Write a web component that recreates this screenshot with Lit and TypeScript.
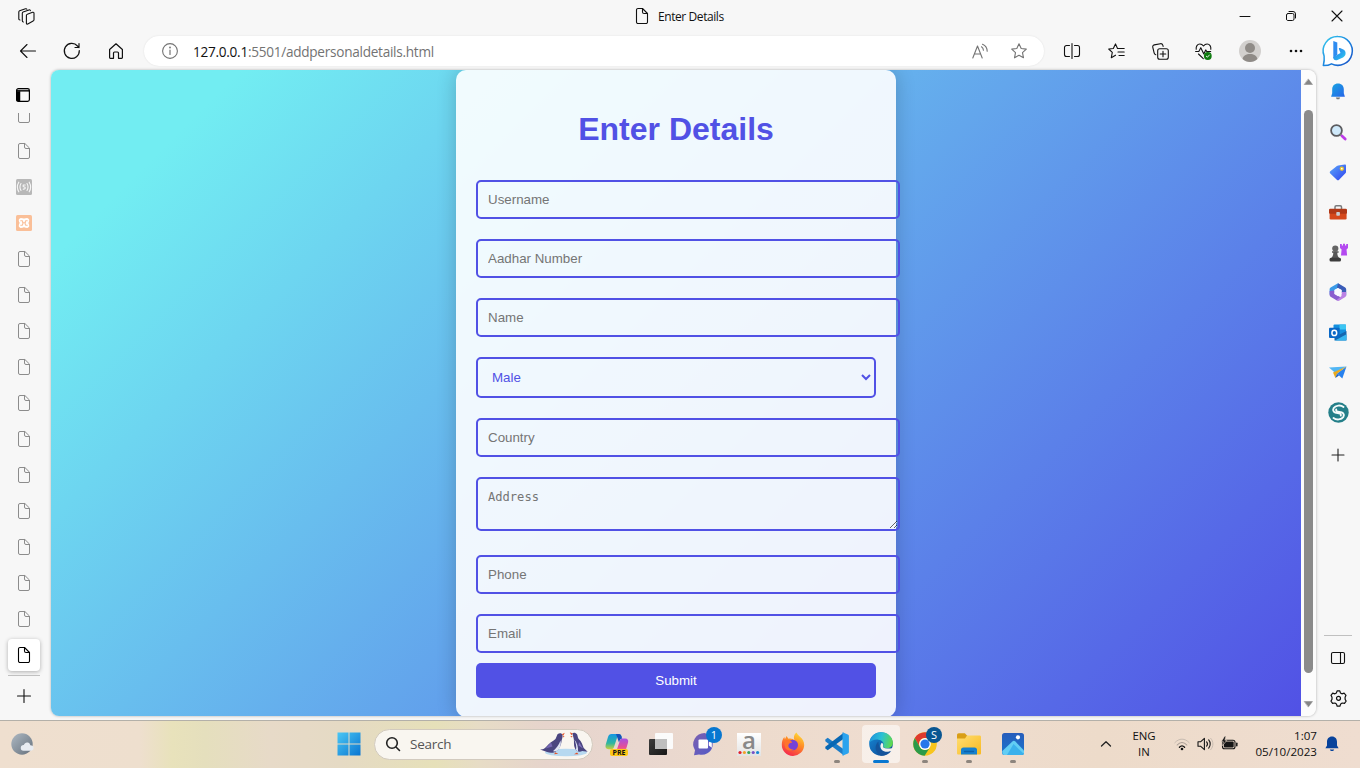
import { LitElement, html, css, svg, TemplateResult } from "lit";
import { customElement } from "lit/decorators.js";

const icon = (w: number, h: number, body: unknown, viewBox = `0 0 ${w} ${h}`) =>
  html`<svg width=${w} height=${h} viewBox=${viewBox} fill="none" stroke-linecap="round" stroke-linejoin="round">${body}</svg>`;

const line = (w: number, h: number, d: string, color = "#111", sw = 1.1) =>
  icon(w, h, svg`<path d=${d} stroke=${color} stroke-width=${sw} />`);

const docPath = "M6.500.500H2A1.500 1.500 0 0 0 .500 2v12A1.500 1.500 0 0 0 2 15.500h8a1.500 1.500 0 0 0 1.500-1.500V5.500zM6.500.500V4A1.500 1.500 0 0 0 8 5.500h3.500";
const doc = (color = "#8c8c8c", sw = 1) => line(12, 16, docPath, color, sw);
const starPath = "M8 .8l2.200 4.700 5.100.6-3.800 3.500 1 5.200L8 12.300l-4.500 2.500 1-5.200L.7 6.100l5.100-.6z";

const tabStack = icon(17, 17, svg`<g stroke="#111" stroke-width="1.1">
  <path d="M9.300 6.200l5.300-1.900c.8-.3 1.400.1 1.400.9v6.500c0 .7-.3 1.100-.9 1.400l-5.300 2.900c-.8.3-1.400 0-1.400-.8V7.400c0-.6.300-1 .9-1.200z"/>
  <path d="M5.400 14c-.8 0-1.100-.4-1.100-1.200V5.200c0-.6.300-1 .8-1.200L11 1.900c.7-.2 1.300 0 1.400.7"/>
  <path d="M2 12c-.8 0-1.200-.4-1.200-1.200V4c0-.6.300-1 .8-1.200L7.500.8c.7-.2 1.200-.1 1.400.5"/></g>`);

const favList = icon(17, 16, svg`<g stroke="#111" stroke-width="1.1"><path d="M9.500 5.500L7.500.9 5.300 5.500.7 6l3.600 3.400-1 5.300 4.200-2.500M9.500 5.500h6.700M10 9h6.200M11 12.500h5.200"/></g>`);

const collections = icon(17, 17, svg`<g stroke="#111" stroke-width="1.1"><rect x="5.700" y="5.700" width="10.600" height="10.600" rx="2"/><path d="M11 8.200v5.600M8.200 11h5.600M3.800 11.800c-.9-.2-1.400-.8-1.600-1.600L.8 4.300C.5 3 1 2.200 2.300 1.900L8.400.7c1.300-.2 2 .3 2.400 1.500l.3 1.200"/></g>`);

const heart = icon(18, 17, svg`<path d="M1.200 6.300C.8 3.500 2.300 1 4.900 1c1.700 0 2.700.8 3.600 2 .9-1.200 1.900-2 3.600-2 2.600 0 4.100 2.500 3.700 5.300M.6 8.500h3.200l2-3.800 3 6.200 1.900-4 1 1.600h4M3.500 11l4.800 4.700" stroke="#111" stroke-width="1.100"/><circle cx="12.800" cy="13" r="3.900" fill="#0f7b10"/><path d="M11.300 13.200l1.100 1 2-2.200" stroke="#fff" stroke-width=".9"/>`);

const avatar = icon(22, 22, svg`<circle cx="11" cy="11" r="11" fill="#d2d0ce"/><circle cx="11" cy="8" r="5" fill="#8f8b87"/><path d="M3.600 19c.6-3.300 3.500-5 7.400-5s6.800 1.700 7.400 5c-4 4-10.800 4-14.800 0z" fill="#8f8b87"/>`);

const bing = icon(32, 32, svg`
  <defs><linearGradient id="bingRing" x1="0" y1="0" x2="1" y2="1"><stop offset="0" stop-color="#37cdee"/><stop offset=".5" stop-color="#1b87e0"/><stop offset="1" stop-color="#1a4ec4"/></linearGradient>
  <linearGradient id="bingB" x1="0" y1="0" x2="1" y2="1"><stop offset="0" stop-color="#2a7be8"/><stop offset=".6" stop-color="#2aa8ee"/><stop offset="1" stop-color="#35d8ea"/></linearGradient></defs>
  <path d="M16 1.500a14.400 14.400 0 1 1-6.500 27.300c-2.500 1.600-5.500 1.800-8.200 1.800.9-3.700 1.200-6.500.8-9.500A14.400 14.400 0 0 1 16 1.500z" fill="#fff" stroke="url(#bingRing)" stroke-width="1.500"/>
  <path d="M11.300 6l4 1.400v12l-4 4z" fill="#2f8cf0"/><path d="M11.300 22.200l4-2.500 3.200-1.700-1.500-3.800c-.4-1 .2-1.400 1-1.100l2.800 1.200c2.200.9 3.200 2.700 2.700 5-.3 1.500-1.200 2.400-2.500 3.200L16 24.700c-2.700 1.500-4.800 0-4.700-2.500z" fill="url(#bingB)"/>`);

const bell = icon(14, 17, svg`<defs><linearGradient id="bellG" x1="0" y1="0" x2="1" y2="1"><stop offset="0" stop-color="#18a6e2"/><stop offset="1" stop-color="#2764e8"/></linearGradient></defs><path d="M4.800 14.500h4.400l-1 1.700H5.800z" fill="#777"/><path d="M7 .5c3.500 0 5.800 2.400 5.800 5.700v4l1.100 3.500H.1l1.100-3.500v-4C1.200 2.900 3.500.5 7 .5z" fill="url(#bellG)"/>`);

const magnifier = icon(17, 17, svg`<circle cx="6.500" cy="6.500" r="5.400" fill="#cfe9fa" stroke="#5c5c60" stroke-width="1.800"/><path d="M10.500 10.500l1.500 1.500" stroke="#777" stroke-width="2"/><path d="M12 12l3.200 3" stroke="#bd3be8" stroke-width="2.800"/>`);

const tag = icon(18, 17, svg`<defs><linearGradient id="tagG" x1="0" y1="0" x2="1" y2="1"><stop offset="0" stop-color="#5ba8fb"/><stop offset="1" stop-color="#3042ee"/></linearGradient></defs><path d="M9.200 1.400l6.500-.9c.9-.1 1.300.3 1.300 1.200v6.200c0 .6-.2 1-.6 1.400l-6.300 6.500c-.7.7-1.600.7-2.300 0L1.300 9.500c-.7-.7-.7-1.500 0-2.200L7.900 2z" fill="url(#tagG)"/><circle cx="12.800" cy="4.700" r="1.500" fill="#fff" stroke="#eec526" stroke-width="1.300"/>`);

const toolbox = icon(18, 15, svg`<path d="M6 4V2c0-.8.4-1.200 1.200-1.200h4.100c.8 0 1.200.4 1.200 1.200v2" stroke="#7b7b7d" stroke-width="1.500"/><rect x=".6" y="7" width="17" height="7.500" rx="1.200" fill="#d5481c"/><rect x="0" y="3.700" width="18" height="5" rx="1.200" fill="#b03817"/><rect x="7.300" y="7" width="3.600" height="3.800" rx=".8" fill="#c8cdd2"/>`);

const chess = icon(19, 19, svg`<path d="M11 1h1.800v1.500h1.200V.8h2v1.700h1.200V1H19v4l-1.500 1.500.6 6H12l.6-6L11 5z" fill="#b44af0"/><circle cx="6.300" cy="5.600" r="3.100" fill="#656565"/><path d="M3 8.200h6.600v1.600H8.300c0 2 .5 3.800 1.900 5.200H2.300c1.400-1.400 2-3.200 2-5.200H3z" fill="#565656"/><rect x=".5" y="14.800" width="11.500" height="3.700" rx="1.500" fill="#3c3c3c"/>`);

const m365 = icon(18, 18, svg`<path d="M9 .3L2 4.300C1 4.900.600 5.500.600 6.600v5.200L5.500 9.500V7L12.500 3z" fill="#3b9be8"/><path d="M9 .3l6.800 3.900c1 .6 1.400 1.300 1.400 2.400v6L12.500 10V7L8 4.700z" fill="#3a5cb8"/><path d="M.6 8v3.500c0 1.100.4 1.800 1.400 2.400l5.500 3.300c1 .5 1.900.5 2.800 0l3-1.800L9 12.800 5.500 10.700V7.500z" fill="#8b5fcf"/><path d="M17.200 9v3c0 1-.4 1.700-1.300 2.200l-5.600 3.200c-1 .5-2 .3-2.800-.2l5-4.200V9z" fill="#bb82e4"/><path d="M9 5l3.600 2.100v4L9 13.200l-3.600-2.100v-4z" fill="#fafaff"/>`);

const outlook = icon(18, 17, svg`<rect x="4.500" y=".5" width="12.500" height="13" rx="1" fill="#1490df"/><path d="M10.500.5H17v5h-6.500z" fill="#3cc5f2"/><path d="M17.500 7v9.500H5.500V13z" fill="#1467b0"/><path d="M6 16.500l11.500-6.300v5.300c0 .6-.4 1-1 1z" fill="#36b6f0"/><rect x="0" y="3.800" width="10.600" height="10.200" rx="1" fill="#0a68c6"/><ellipse cx="5.300" cy="8.900" rx="2.400" ry="2.600" stroke="#fff" stroke-width="1.500"/>`);

const plane = icon(18, 13, svg`<path d="M0 1.500L17.500.4 5.800 6.600z" fill="#51b6f4"/><path d="M17.500.4L8 7.500l5.300 5z" fill="#2781ee"/><path d="M17.500.4L4 6.500l2.400 5.500L8 7.700z" fill="#eaaa20"/><path d="M8 7.700L6.400 12l3.600-2.500z" fill="#1c60c8"/>`);

const swirl = icon(21, 21, svg`<circle cx="10.500" cy="10.500" r="10.200" fill="#247f89"/><path d="M15.500 5C12.500 2.700 7.500 3.300 5.700 6c-1.600 2.800.5 5 3.800 5 2.500 0 3.800 1 3.300 2.600M5.500 16c3 2.300 8 1.700 9.800-1 1.600-2.800-.5-5-3.800-5-2.500 0-3.800-1-3.300-2.600" stroke="#f4fbfb" stroke-width="1.900"/>`);

const gearPath = "M7.200.8h2.600l.6 2.100 1.500.9 2.200-.6 1.900 2.100-.9 2v1.900l1 1.900-1.600 2.300-2.300-.4-1.500.9-.8 2.300H7.200l-.8-2.300-1.500-.9-2.300.4L1 11.100l1-1.900V7.300L1 5.300l1.700-2.100 2.200.6 1.500-.9z";
const gear = icon(17, 17, svg`<path d=${gearPath} stroke="#111" stroke-width="1.200"/><circle cx="8.500" cy="8.300" r="2" stroke="#111" stroke-width="1.200"/>`);

const weather = icon(24, 24, svg`<defs><linearGradient id="moonG" x1="0" y1="0" x2="1" y2="1"><stop offset="0" stop-color="#aeb9c3"/><stop offset="1" stop-color="#65707c"/></linearGradient></defs><circle cx="11" cy="12" r="10.700" fill="url(#moonG)"/><path d="M12.500 18.800a2.900 2.900 0 0 1 .3-5.800c.7-2 2.200-2.800 3.800-2.500 1.500.2 2.400 1.200 2.700 2.700 2 0 3.300 1 3.300 2.800s-1.200 2.800-3 2.800z" fill="#e8ecf2"/>`);

const windows = icon(24, 24, svg`<defs><linearGradient id="winG" gradientUnits="userSpaceOnUse" x1="0" y1="0" x2="24" y2="24"><stop offset="0" stop-color="#4cc9f5"/><stop offset="1" stop-color="#0873d0"/></linearGradient></defs><path d="M.5.500h11v11H.500zM12.500.500h11v11h-11zM.500 12.500h11v11H.500zM12.500 12.500h11v11h-11z" fill="url(#winG)"/>`);

const penguins = icon(50, 26, svg`<ellipse cx="27" cy="21.500" rx="21" ry="3.800" fill="#b7d9f0"/>
  <path d="M18.500 3.200c2-1.500 4.500-1.200 5 .8.300 2-.3 3.600-.9 5.400-.3 5-2.500 9.400-6.500 11.500-3 1.300-5.200 1-8 .2L1 18.500c3.200.2 4.500-.7 6.500-3 2.600-3.300 6.300-5.300 9-7.500z" fill="#4a4580"/>
  <path d="M21.500 9.500c1 3.700-.1 7.300-2.800 9.800-1.600 1.200-3 1.300-4.800 1 3.300-2.700 6-6.200 7.600-10.800z" fill="#dfe4f4"/><path d="M12 11.500L6.500 17.500l7-2z" fill="#7768b4"/>
  <path d="M22.800 3.300l3-1.600-1.500 3zM16 21.300l3.300 1.500-4 .4zM23.700 5.300l1.800-.2-.9 1.400z" fill="#e2552c"/>
  <path d="M33.300 2.300c1.200-1.200 3.800-.7 4.700 1 .7 1.300.6 2.600 1.500 4.500 3.300 3 4.200 6.600 5.200 9.300l4 3.600-5.500-.6c-2.500 1.500-5.500.7-7.200-2.500-1.600-3.200-.7-6.800-1.200-9.500z" fill="#4a4580"/>
  <path d="M35.300 8.500c1.700 3.500 2.400 7.500 1.700 10.500l2 1.500c.4-4.500-1-9-3.700-12z" fill="#dfe4f4"/><path d="M40 11l4 6.500-4.500-3z" fill="#8375c0"/>
  <path d="M33.800 2.600l-3-1.300 1.500 2.900zM38 21.500l-3 1.700h4.500zM33.500 4.900l-2.300.3 1.600 1.300z" fill="#e2552c"/>`);

const copilot = icon(24, 24, svg`<defs><linearGradient id="cpA" x1="0" y1="0" x2="0" y2="1"><stop offset="0" stop-color="#1597e4"/><stop offset=".6" stop-color="#2eb5a0"/><stop offset="1" stop-color="#c8d03c"/></linearGradient><linearGradient id="cpB" x1="0" y1="0" x2="0" y2="1"><stop offset="0" stop-color="#a551e4"/><stop offset=".6" stop-color="#e84e93"/><stop offset="1" stop-color="#f7a04f"/></linearGradient></defs>
  <path d="M6.500 2h7c2 0 2.700 1 3.200 3h-4.400L9 15c-.5 1.600-1.300 2.200-3 2.200H3.500C1 17.200 0 15.300.7 12.800L3 4.900C3.600 3 4.600 2 6.500 2z" fill="url(#cpA)"/><path d="M17.500 21h-7c-2 0-2.700-1-3.200-3h4.400L15 8.500c.5-1.500 1.300-2 3-2h2.200c2.500 0 3.500 1.700 2.800 4.200L20.800 18c-.6 2-1.500 3-3.300 3z" fill="url(#cpB)"/><path d="M11 2h2.500c2 0 2.700 1 3.200 3l.4 1.600c-1.500.2-2 1-2.400 2L14 10.500z" fill="#1753ba"/>`);

const taskView = icon(24, 24, svg`<defs><linearGradient id="tvG" x1="0" y1="0" x2="1" y2="1"><stop offset="0" stop-color="#3d3d3d"/><stop offset="1" stop-color="#171717"/></linearGradient></defs><rect x="0" y="7" width="18" height="16" rx="1" fill="url(#tvG)"/><rect x="6" y="1" width="18" height="16" rx="1" fill="#fbfbfb"/><path d="M6 7h12v10H6z" fill="#bebebe"/>`);

const chat = icon(24, 24, svg`<defs><linearGradient id="chatG" x1="0" y1="0" x2="1" y2="1"><stop offset="0" stop-color="#7d61b0"/><stop offset="1" stop-color="#5159c8"/></linearGradient></defs><path d="M11.500 1A11 11 0 1 1 6 22.500L1 23.300l1-5A11.300 11.300 0 0 1 11.500 1z" fill="url(#chatG)"/><rect x="5.500" y="7.500" width="9.500" height="9" rx="1" fill="#fff"/><path d="M15.800 10.500l3-2.200v7.400l-3-2.200z" fill="#fff"/>`);

const firefox = icon(24, 24, svg`<defs><linearGradient id="ffG" x1=".8" y1="0" x2=".3" y2="1"><stop offset="0" stop-color="#ffe038"/><stop offset=".45" stop-color="#ff8a26"/><stop offset="1" stop-color="#f5264f"/></linearGradient></defs><path d="M15.500.5c.8 2 2 2.700 3.500 4.300 2.800 2.300 4.200 5 4.200 8.200A11.200 11.200 0 1 1 .8 12.500c0-3.200 1-5.500 2.500-7.500l.6 2.300L5.600 4l1.800 2.800c2.300-.8 5 0 6 1.500C12.300 5 13 2.500 15.500.5z" fill="url(#ffG)"/><circle cx="11.700" cy="13" r="5.300" fill="#7542d7"/><path d="M4.500 8.300c2.800-1 5.700 0 6.800 2.200-1.500 0-3.400.8-3.900 2.500C7 16 10 17.700 13 17.500c-4.500 2.500-8.700.5-9.200-3.500-.3-2.200 0-4 .7-5.700z" fill="#ff742d"/>`);

const vscode = icon(24, 24, svg`<path d="M.3 7.500l2.400-1.700L19 17.500v6L.3 9.300z" fill="#1c7cc8"/><path d="M.3 16.500l2.400 1.700L19 6.500V.5L.3 14.700z" fill="#0867b3"/><path d="M17.500.2l5.300 2.200c.7.3 1.100.8 1.100 1.600v16c0 .8-.4 1.300-1.100 1.600l-5.300 2.200z" fill="#2ba3ee"/>`);

const edge = icon(24, 24, svg`<defs><linearGradient id="edA" x1="0" y1=".3" x2="1" y2=".5"><stop offset="0" stop-color="#1e92db"/><stop offset=".5" stop-color="#2bc1d5"/><stop offset="1" stop-color="#60d84c"/></linearGradient><linearGradient id="edB" x1="0" y1="0" x2="1" y2="1"><stop offset="0" stop-color="#1688d7"/><stop offset="1" stop-color="#0d468e"/></linearGradient></defs><circle cx="12" cy="12" r="11.800" fill="url(#edB)"/><path d="M.3 11C1 4.600 5.900.2 12 .2c7 0 11.900 5 11.900 10.500 0 3.300-2.600 5.500-5.700 5.500-3.200 0-4.600-1.200-4-2.500 1.200-2.600-.8-5.500-4.700-6C5.500 7.200 2 8.600.3 11z" fill="url(#edA)"/><path d="M9.500 9.500c-3.800 2.800-4.700 10.500 2.500 14.300 4 .3 8-1.700 10.200-4.800-5.800 3.100-13.200-1-12.700-9.500z" fill="#14549c"/><path d="M13 10.800c-2.500 2-2.300 6.700 2 8.500 3 1 5.500.5 8-1l.8-2.600c-1.500.6-3.500.9-5.600.9-3.200 0-4.800-1.300-4.200-2.800.4-1 .2-2.200-1-3z" fill="#f4f1ee"/>`);

const chrome = icon(24, 24, svg`<circle cx="12" cy="12" r="11.800" fill="#f8c51c"/><path d="M1.800 6.100A11.800 11.800 0 0 1 22.200 6H12a6 6 0 0 0-5.200 9z" fill="#df3a2e"/><path d="M1.800 6.100a11.800 11.800 0 0 0 9.800 17.700l5.600-8.800a6 6 0 0 1-10.400 0z" fill="#2b9a4a"/><circle cx="12" cy="12" r="5.900" fill="#fff"/><circle cx="12" cy="12" r="4.600" fill="#2777ea"/>`);

const folder = icon(24, 24, svg`<defs><linearGradient id="foG" x1="0" y1="0" x2="1" y2="1"><stop offset="0" stop-color="#ffde72"/><stop offset="1" stop-color="#f8b921"/></linearGradient></defs><path d="M0 3.500C0 2 .5 1.300 1.800 1.300h6L10.500 4v3H0z" fill="#d99e16"/><path d="M0 6.500h8l2-3h12.500c1 0 1.500.5 1.500 1.500v16c0 1-.5 1.500-1.500 1.500h-21C.5 22.500 0 22 0 21z" fill="url(#foG)"/><path d="M4 22.500V18c0-1.800.8-2.600 2.500-2.600h11c1.700 0 2.500.8 2.500 2.600v4.500z" fill="#1680ce"/><path d="M7.500 19.500h9" stroke="#0b61ab" stroke-width="1.300"/>`);

const photos = icon(24, 24, svg`<defs><linearGradient id="phG" x1="0" y1="0" x2="0" y2="1"><stop offset="0" stop-color="#275dbb"/><stop offset="1" stop-color="#1a75cd"/></linearGradient></defs><rect x="1" y="1" width="22" height="22" rx="2.500" fill="url(#phG)"/><path d="M1.300 19L11.400 9.500c1-.9 2-.9 3 0l8.600 9v2c0 1.600-.9 2.500-2.500 2.500h-17C2 23 1 22 1.300 19z" fill="#62cdf4"/><path d="M12.500 12L23 22c-.8.800-1.500 1-2.500 1H6z" fill="#1b9be6" opacity=".55"/><circle cx="17" cy="5.300" r="2.100" fill="#fff"/>`);

const wifi = icon(16, 13, svg`<path d="M.8 4.700C5-.1 11-.1 15.200 4.700" stroke="#c8bcb1" stroke-width="1"/><path d="M3.200 7c3-3.300 6.600-3.300 9.600 0" stroke="#a89d94" stroke-width="1.100"/><path d="M5.400 9.200c1.700-1.800 3.500-1.800 5.200 0" stroke="#111" stroke-width="1.300"/><circle cx="8" cy="11" r="1.300" fill="#111"/>`);

const volume = icon(17, 14, svg`<path d="M1 4.800h2.500L7.400 1.300v11.400L3.500 9.200H1zM9.600 4.800c1 1.200 1 3.200 0 4.400M11.700 2.900c2 2.300 2 5.900 0 8.200" stroke="#161616" stroke-width="1.100"/><path d="M13.700 1.300c3 3.200 3 8.200 0 11.400" stroke="#c8bcb1" stroke-width="1"/>`);

const battery = icon(17, 14, svg`<rect x="1.500" y="3.300" width="12.500" height="8.400" rx="2" stroke="#161616" stroke-width="1.100"/><rect x="2.800" y="4.600" width="9.900" height="5.800" rx=".8" fill="#161616"/><path d="M15.800 6.200v2.600" stroke="#161616" stroke-width="1.500"/><path d="M3.600-.8L.3 4.700h2L1.500 8.700 5.900 3.200h-2L4.900-.8z" fill="#161616" stroke="#eeddcf" stroke-width=".6"/>`);

const noticeBell = icon(14, 16, svg`<path d="M7 .5c3.200 0 5 2.300 5 5.200v3.800l1.600 2.800H.4L2 9.500V5.700C2 2.800 3.800.5 7 .5zM4.800 13.500h4.400c-.4 1-1.200 1.600-2.200 1.600s-1.800-.6-2.200-1.600z" fill="#07429b"/>`);

@customElement("details-form")
export class DetailsForm extends LitElement {
  static styles = css`
    :host { display: block; font-family: "Liberation Sans", Arial, sans-serif; }
    .card { box-sizing: border-box; width: 440px; height: 647px; padding: 20px; border-radius: 10px; background: rgba(255, 255, 255, 0.9); box-shadow: 0 0 20px rgba(0, 0, 0, 0.2); }
    .title { margin: 18px 0 30px; height: 42px; line-height: 42px; font-size: 32px; text-align: center; color: #5151e5; }
    .form { display: flex; flex-direction: column; gap: 20px; width: 400px; }
    .field { box-sizing: border-box; width: 424px; height: 39px; margin: 0; padding: 10px; border: 2px solid #5151e5; border-radius: 5px; background: transparent; font-family: inherit; font-size: 13.333px; color: #5151e5; outline: none; }
    .field::placeholder { color: #757575; }
    .choice { width: 400px; height: 41px; }
    .area { height: 54px; margin-bottom: 4px; padding-top: 11px; font-family: "DejaVu Sans Mono", monospace; font-size: 12.1px; }
    .submit { width: 400px; height: 35px; margin-top: -10px; padding: 0; border: 0; border-radius: 5px; background: #5151e5; color: #fff; font-family: inherit; font-size: 13.333px; }
  `;

  render() {
    return html`<div class="card">
      <h1 class="title">Enter Details</h1>
      <div class="form">
        <input class="field" placeholder="Username" />
        <input class="field" placeholder="Aadhar Number" />
        <input class="field" placeholder="Name" />
        <select class="field choice"><option>Male</option></select>
        <input class="field" placeholder="Country" />
        <textarea class="field area" placeholder="Address"></textarea>
        <input class="field" placeholder="Phone" />
        <input class="field" placeholder="Email" />
        <button class="submit">Submit</button>
      </div>
    </div>`;
  }
}

@customElement("app-root")
export class AppRoot extends LitElement {
  static styles = css`
    :host { display: flex; flex-direction: column; width: 1360px; height: 768px; overflow: hidden; background: #f7f7f7; color: #111; font-family: "Open Sans", "Noto Sans", sans-serif; font-size: 12px; }
    svg { display: block; flex: none; overflow: visible; }
    .titlebar { display: grid; grid-template-columns: 52px 1fr 138px; height: 32px; align-items: center; }
    .center { display: flex; align-items: center; justify-content: center; }
    .tab-title { display: flex; align-items: center; gap: 10px; padding-left: 584px; font-size: 12px; letter-spacing: -0.42px; white-space: nowrap; }
    .controls { display: grid; grid-template-columns: repeat(3, 46px); }
    .toolbar { display: flex; height: 38px; align-items: center; }
    .nav { display: flex; padding: 0 6px; }
    .tool { width: 44px; height: 38px; }
    .tool.wide { width: 48px; }
    .tool.last { width: 40px; }
    .address { display: flex; align-items: center; box-sizing: border-box; width: 900px; height: 30px; margin-right: 6px; padding: 0 17px 0 18px; border-radius: 15px; background: #fff; box-shadow: 0 0 2px rgba(0, 0, 0, 0.1); }
    .url { flex: 1; padding-left: 15px; font-size: 13.6px; letter-spacing: -0.27px; color: #737373; white-space: nowrap; }
    .host { color: #111; }
    .address-icons { display: flex; gap: 23px; align-items: center; }
    .middle { display: flex; height: 650px; }
    .tabs { display: flex; flex-direction: column; width: 51px; }
    .tabs-menu { height: 43px; padding-left: 16px; padding-top: 18px; box-sizing: border-box; }
    .clipped { display: flex; align-items: flex-end; box-sizing: border-box; height: 10px; margin-bottom: 10px; padding-left: 18px; overflow: hidden; }
    .tab { display: flex; align-items: center; justify-content: center; width: 48px; height: 36px; }
    .active { display: flex; align-items: center; justify-content: center; width: 32px; height: 32px; border-radius: 4px; background: #fff; box-shadow: 0 1px 4px rgba(0, 0, 0, 0.3); }
    .rule { height: 1px; margin: 2px 0 0 8px; width: 32px; background: #c0c0c0; }
    .new-tab { width: 47px; height: 39px; }
    .view { display: flex; width: 1265px; height: 646px; border-radius: 8px; overflow: hidden; box-shadow: 0 0 3px rgba(0, 0, 0, 0.3); }
    .page { display: flex; justify-content: center; width: 1250px; height: 646px; overflow: hidden; background: linear-gradient(135deg, #72edf2 10%, #5151e5 100%); }
    .scroll { display: flex; flex-direction: column; align-items: center; justify-content: space-between; box-sizing: border-box; width: 15px; padding: 8px 0; background: #fcfcfc; }
    .thumb { width: 9px; height: 563px; margin-top: 13px; margin-bottom: 17px; border-radius: 5px; background: #8b8b8b; }
    .side { display: flex; flex-direction: column; align-items: center; width: 44px; }
    .app { width: 44px; height: 40px; }
    .app.first { height: 41px; margin-top: 1px; }
    .side .plus { width: 43px; height: 46px; }
    .side-rule { width: 28px; height: 1px; margin-top: 157px; margin-bottom: 2px; background: #c0c0c0; }
    .taskbar { position: relative; display: flex; align-items: center; box-sizing: border-box; height: 48px; padding-left: 1px; padding-bottom: 1px; border-top: 1px solid #b3b0a9; background: linear-gradient(90deg, #efdfcf 0, #eedfce 140px, #e8e2bb 172px, #e5dfbd 205px, #e7dac8 270px, #e5dac4 340px, #e6e0b9 435px, #e7dcc6 480px, #e6d4cc 545px, #e9d7cf 640px, #eddbcd 760px, #efddd0 900px, #eddbca 1100px, #efddd0 1360px); }
    .weather { width: 44px; }
    .start { width: 44px; margin-left: 282px; }
    .search { display: flex; align-items: center; box-sizing: border-box; width: 219px; height: 31px; margin-left: 3px; margin-right: 2px; padding: 0 3px 0 11px; border: 1px solid #d2cabe; border-radius: 16px; background: #f9f6f0; font-size: 13.5px; color: #555; letter-spacing: -0.25px; }
    .search-label { flex: 1; padding-left: 10px; }
    .task { position: relative; display: flex; align-items: center; justify-content: center; width: 44px; height: 46px; }
    .task.selected::before { content: ""; position: absolute; left: 3px; top: 4px; width: 38px; height: 38px; border-radius: 4px; background: rgba(255, 255, 255, 0.55); }
    .task svg { position: relative; }
    .running::after { content: ""; position: absolute; left: 19px; top: 39px; width: 6px; height: 3px; border-radius: 2px; background: #8d857e; }
    .selected.running::after { left: 14px; width: 16px; background: #0877d1; }
    .badge { position: absolute; left: 23px; top: 6px; width: 16px; height: 16px; border-radius: 8px; background: #0877d0; color: #fff; font-size: 11px; line-height: 16px; text-align: center; }
    .badge.dark { background: #095692; }
    .pre { position: absolute; left: 15px; top: 28px; width: 18px; height: 7px; border-radius: 2px; background: #ffc817; color: #111; font-size: 7px; line-height: 7px; font-weight: 700; text-align: center; }
    .letter { display: flex; flex-direction: column; align-items: center; width: 24px; height: 23px; background: linear-gradient(#fff, #e3e3e3); color: #888; font-weight: 600; font-size: 24px; line-height: 14px; }
    .glyph { height: 18px; }
    .dots { display: flex; gap: 1px; }
    .tray { display: flex; align-items: center; margin-left: 59px; }
    .chevron { width: 24px; }
    .lang { width: 34px; margin-left: 9px; font-size: 11.4px; line-height: 16px; text-align: center; }
    .status { display: flex; align-items: center; gap: 7px; margin-left: 13px; }
    .clock { width: 79px; font-size: 11.6px; line-height: 16px; text-align: right; white-space: nowrap; }
    .notice { margin-left: 8px; }
  `;

  private tab(content: TemplateResult) {
    return html`<div class="tab">${content}</div>`;
  }

  private task(content: TemplateResult, cls = "", extra: unknown = "") {
    return html`<div class="task ${cls}">${content}${extra}</div>`;
  }

  render() {
    const liveServer = icon(16, 16, svg`<rect width="16" height="16" rx="1.500" fill="#b8b8b8"/><path d="M2.800 3.200c-1.800 3-1.800 6.600 0 9.600M5 4.500c-1.300 2.200-1.300 4.800 0 7M13.200 3.200c1.800 3 1.800 6.600 0 9.600M11 4.500c1.300 2.200 1.300 4.800 0 7M9.300 6H7.200v1.700c2.700-.3 2.700 2.700 0 2.400" stroke="#f7f7f7" stroke-width="1.100"/>`);
    const xampp = icon(16, 16, svg`<rect width="16" height="16" rx="1.500" fill="#fabf98"/><path d="M5 5.500h1.500l1 2.500-1 2.500H5M11 5.500H9.500L8.500 8l1 2.500H11M5 5.500L6 8l-1 2.500M11 5.500L10 8l1 2.500" stroke="#fff" stroke-width="4.600"/><path d="M4.800 5.800c1.200-.3 1.900 0 1.900 1.200v.9h2.600V7c0-1.200.7-1.500 1.900-1.200M4.800 10.200c1.200.3 1.900 0 1.900-1.200M11.200 10.200c-1.200.3-1.900 0-1.900-1.200" stroke="#fabf98" stroke-width="1.100"/>`);
    const apps = [magnifier, tag, toolbox, chess, m365, outlook, plane, swirl];
    const dots = ["#e3202c", "#f1a12a", "#35a457", "#7651c5", "#1587d3"];
    return html`
      <div class="titlebar">
        <div class="center">${tabStack}</div>
        <div class="tab-title">${doc("#111", 1.1)}<span>Enter Details</span></div>
        <div class="controls">
          <div class="center">${line(10, 10, "M0 5.500h10", "#111", 1)}</div>
          <div class="center">${line(10, 10, "M2 2.500h4.500a1.500 1.500 0 0 1 1.500 1.500v4a1.500 1.500 0 0 1-1.500 1.500h-5A1.500 1.500 0 0 1 .5 8V4A1.500 1.500 0 0 1 2 2.500M3 .5h4a2.500 2.500 0 0 1 2.500 2.500v4", "#111", 1)}</div>
          <div class="center">${line(10, 10, "M0 0l10 10M10 0L0 10", "#111", 1.1)}</div>
        </div>
      </div>
      <div class="toolbar">
        <div class="nav">
          <div class="tool center">${line(16, 14, "M.5 7H15.500M7 .5L.5 7 7 13.500")}</div>
          <div class="tool center">${line(16, 16, "M15.300 7.500A7.500 7.500 0 1 1 13.500 3L15 4.500M15 .5v4h-4", "#111", 1.2)}</div>
          <div class="tool center">${line(14, 16, "M.6 6.500L7 .8l6.400 5.700v8a.8.800 0 0 1-.8.800H9.500V10A1 1 0 0 0 8.500 9h-3a1 1 0 0 0-1 1v5.300H1.400a.8.800 0 0 1-.8-.8z", "#111", 1.2)}</div>
        </div>
        <div class="address">
          ${icon(16, 16, svg`<circle cx="8" cy="8" r="7.400" stroke="#737373" stroke-width="1.100"/><path d="M8 7v4.500" stroke="#737373" stroke-width="1.200"/><circle cx="8" cy="4.500" r=".9" fill="#737373"/>`)}
          <div class="url"><span class="host">127.0.0.1</span>:5501/addpersonaldetails.html</div>
          <div class="address-icons">
            ${line(16, 15, "M.8 14L5.500 2 10.200 14M2.400 10h6.200M9.500 2.800c1.300.8 1.900 2 1.900 3.500M10.500.3c3 1.200 4.600 3.700 4.700 7", "#737373")}
            ${line(16, 16, starPath, "#737373")}
          </div>
        </div>
        <div class="tool center">${line(16, 16, "M8 .5v15M5.500 2.500h-3a2 2 0 0 0-2 2v7a2 2 0 0 0 2 2h3M10.500 2.500h3a2 2 0 0 1 2 2v7a2 2 0 0 1-2 2h-3", "#111", 1.1)}</div>
        <div class="tool center">${favList}</div>
        <div class="tool center">${collections}</div>
        <div class="tool center">${heart}</div>
        <div class="tool wide center">${avatar}</div>
        <div class="tool center">${icon(14, 4, svg`<g fill="#111"><circle cx="2" cy="2" r="1.300"/><circle cx="7" cy="2" r="1.300"/><circle cx="12" cy="2" r="1.300"/></g>`)}</div>
        <div class="tool last center">${bing}</div>
      </div>
      <div class="middle">
        <div class="tabs">
          <div class="tabs-menu">${icon(14, 14, svg`<rect x=".6" y=".6" width="12.800" height="12.800" rx="1.800" stroke="#000" stroke-width="1.200"/><path d="M1 3.300h12v-1H1zM1 3h3v10H1z" fill="#000" stroke="#000" stroke-width=".5"/>`)}</div>
          <div class="clipped">${doc()}</div>
          ${this.tab(doc())}${this.tab(liveServer)}${this.tab(xampp)}
          ${Array.from({ length: 11 }, () => this.tab(doc()))}
          ${this.tab(html`<div class="active">${doc("#000", 1.1)}</div>`)}
          <div class="rule"></div>
          <div class="new-tab center">${line(14, 14, "M7 .5v13M.5 7h13", "#111", 1.1)}</div>
        </div>
        <div class="view">
          <div class="page"><details-form></details-form></div>
          <div class="scroll">
            ${icon(9, 8, svg`<path d="M4.500 1.200L8.500 6.500H.5z" fill="#858585" stroke="#858585" stroke-width=".5"/>`)}
            <div class="thumb"></div>
            ${icon(9, 8, svg`<path d="M4.500 6.800L8.500 1.500H.5z" fill="#858585" stroke="#858585" stroke-width=".5"/>`)}
          </div>
        </div>
        <div class="side">
          <div class="app first center">${bell}</div>
          ${apps.map((a) => html`<div class="app center">${a}</div>`)}
          <div class="plus center">${line(12, 12, "M6 0v12M0 6h12", "#222", 1.1)}</div>
          <div class="side-rule"></div>
          <div class="app center">${line(14, 12, "M2 .5h10A1.500 1.500 0 0 1 13.500 2v8a1.500 1.500 0 0 1-1.500 1.500H2A1.500 1.500 0 0 1 .5 10V2A1.500 1.500 0 0 1 2 .5M9.500.5v11", "#111", 1.1)}</div>
          <div class="app center">${gear}</div>
        </div>
      </div>
      <div class="taskbar">
        <div class="weather center">${weather}</div>
        <div class="start center">${windows}</div>
        <div class="search">
          ${line(14, 14, "M11.300 6A5.300 5.300 0 1 1 .7 6a5.300 5.300 0 0 1 10.600 0M10 10l3.500 3.500", "#222", 1.6)}
          <span class="search-label">Search</span>${penguins}
        </div>
        ${this.task(copilot, "", html`<span class="pre">PRE</span>`)}
        ${this.task(taskView)}
        ${this.task(chat, "", html`<span class="badge">1</span>`)}
        ${this.task(html`<div class="letter"><span class="glyph">a</span><div class="dots">${icon(22, 4, dots.map((c, i) => svg`<circle cx=${2 + i * 4.4} cy="1.500" r="1.600" fill=${c} />`))}</div></div>`)}
        ${this.task(firefox)}
        ${this.task(vscode, "running")}
        ${this.task(edge, "running selected")}
        ${this.task(chrome, "running", html`<span class="badge dark">S</span>`)}
        ${this.task(folder, "running")}
        ${this.task(photos, "running")}
        <div class="tray">
          <div class="chevron center">${line(10, 6, "M.5 5L5 .8 9.500 5", "#222", 1.3)}</div>
          <div class="lang">ENG<br />IN</div>
          <div class="status">${wifi}${volume}${battery}</div>
          <div class="clock">1:07<br />05/10/2023</div>
          <div class="notice">${noticeBell}</div>
        </div>
      </div>
    `;
  }
}
